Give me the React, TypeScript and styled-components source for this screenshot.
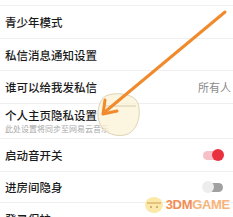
import React from 'react';
import styled, { createGlobalStyle } from 'styled-components';

const GlobalStyle = createGlobalStyle`
  html, body {
    margin: 0;
    padding: 0;
    background: #fff;
    overflow: hidden;
  }
  body {
    font-family: "Noto Sans CJK SC", "Noto Sans", sans-serif;
  }
`;

const Page = styled.div`
  position: relative;
  width: 233px;
  height: 217px;
  overflow: hidden;
  background: #fff;
`;

const TopEdge = styled.div`
  height: 5px;
  border-bottom: 1px solid #f0f0f0;
`;

const Row = styled.div<{ $h: number }>`
  height: ${p => p.$h}px;
  border-bottom: 1px solid #efefef;
  display: flex;
  align-items: center;
  justify-content: space-between;
  padding: 0 10px 0 5px;
  box-sizing: border-box;
`;

const TextCol = styled.div`
  display: flex;
  flex-direction: column;
  gap: 2px;
`;

const Title = styled.span`
  font-size: 11.5px;
  line-height: 14px;
  font-weight: 500;
  color: #1a1a1a;
  white-space: nowrap;
`;

const Sub = styled.span`
  font-size: 8px;
  line-height: 10px;
  color: #a8a8a8;
  white-space: nowrap;
`;

const Value = styled.span`
  font-size: 11px;
  color: #8a8a8a;
  margin-right: -8px;
`;

const Track = styled.div<{ $on: boolean }>`
  position: relative;
  width: 20px;
  height: 9px;
  border-radius: 5px;
  background: ${p => (p.$on ? '#f7c0c6' : '#a0a0a0')};
`;

const Knob = styled.div<{ $on: boolean }>`
  position: absolute;
  top: -1.5px;
  left: ${p => (p.$on ? '9px' : '-1px')};
  width: 12px;
  height: 12px;
  border-radius: 50%;
  background: ${p => (p.$on ? '#e8303f' : '#ededed')};
`;

const Overlay = styled.svg`
  position: absolute;
  left: 0;
  top: 0;
  pointer-events: none;
`;

const Watermark = styled.div`
  position: absolute;
  right: 3px;
  bottom: 3px;
  display: flex;
  align-items: center;
  gap: 1px;
`;

const Mark = styled.span`
  font-family: "Liberation Sans", Arial, sans-serif;
  font-weight: bold;
  font-size: 13px;
  letter-spacing: -0.3px;
  color: #f07a3a;
  opacity: 0.85;
  span {
    color: #f6a765;
  }
`;

const Toggle: React.FC<{ on: boolean }> = ({ on }) => (
  <Track $on={on}>
    <Knob $on={on} />
  </Track>
);

const App: React.FC = () => {
  return (
    <Page>
      <GlobalStyle />
      <TopEdge />
      <Row $h={33}><Title>青少年模式</Title></Row>
      <Row $h={32}><Title>私信消息通知设置</Title></Row>
      <Row $h={33}>
        <Title>谁可以给我发私信</Title>
        <Value>所有人</Value>
      </Row>
      <Row $h={35}>
        <TextCol>
          <Title>个人主页隐私设置</Title>
          <Sub>此处设置将同步至网易云音乐</Sub>
        </TextCol>
      </Row>
      <Row $h={33}>
        <Title>启动音开关</Title>
        <Toggle on />
      </Row>
      <Row $h={31}>
        <Title>进房间隐身</Title>
        <Toggle on={false} />
      </Row>
      <Row $h={33}><Title>登录保护</Title></Row>

      <Overlay width="233" height="217" viewBox="0 0 233 217">
        <g opacity="0.75">
          <path d="M103 98 C 108 92, 130 92, 136 100 C 142 108, 140 128, 128 134 C 118 138, 104 134, 100 124 C 96 116, 98 104, 103 98 Z" fill="#fbf3d6" stroke="#c9b88a" strokeWidth="0.8" />
          <path d="M104 106 L 136 106" stroke="#b8a070" strokeWidth="0.7" />
        </g>
        <line x1="225" y1="12" x2="106" y2="111" stroke="#f08a2c" strokeWidth="3" strokeLinecap="round" />
        <path d="M103 114 L 105 100 M103 114 L 117 111" stroke="#f08a2c" strokeWidth="3" strokeLinecap="round" fill="none" />
      </Overlay>

      <Watermark>
        <svg width="22" height="20" viewBox="0 0 22 20">
          <ellipse cx="11" cy="11" rx="9" ry="8" fill="#fbe49a" opacity="0.85" />
          <path d="M4 9 L 18 9" stroke="#c98a3a" strokeWidth="0.8" />
          <circle cx="8" cy="13" r="0.8" fill="#9a6a2a" />
          <circle cx="14" cy="13" r="0.8" fill="#9a6a2a" />
        </svg>
        <Mark>3DM<span>GAME</span></Mark>
      </Watermark>
    </Page>
  );
};

export default App;
